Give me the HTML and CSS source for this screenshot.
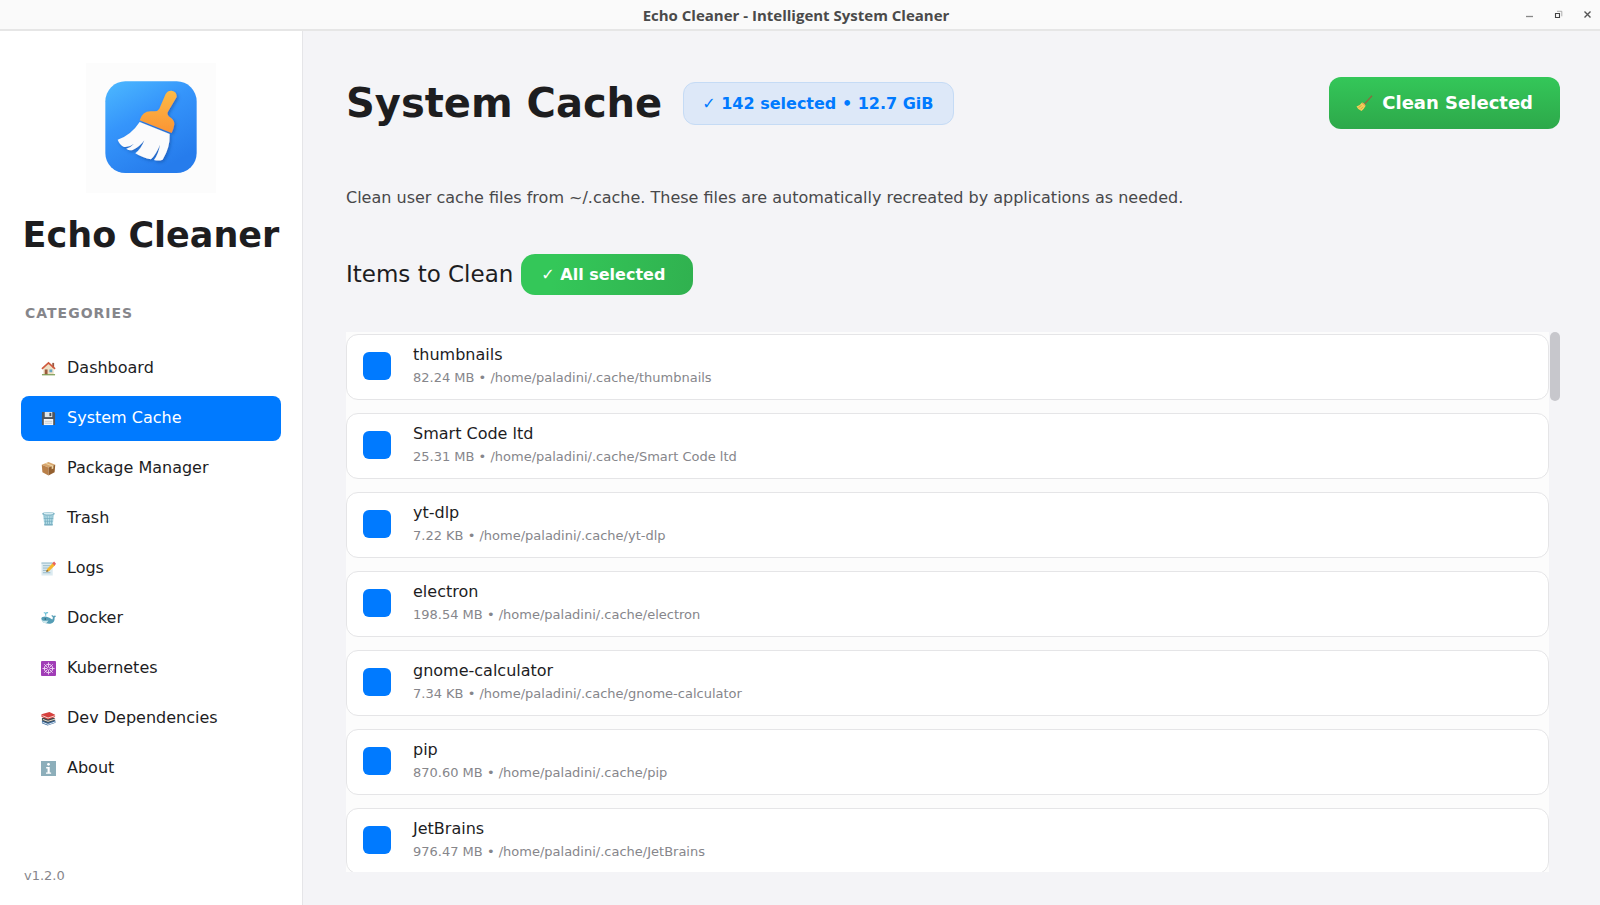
FILE: index.html
```html
<!DOCTYPE html>
<html lang="en">
<head>
<meta charset="utf-8">
<title>Echo Cleaner - Intelligent System Cleaner</title>
<link rel="stylesheet" href="styles.css">
</head>
<body>
<header class="titlebar">
  <span class="titlebar-side"></span>
  <span class="titlebar-text">Echo Cleaner - Intelligent System Cleaner</span>
  <span class="titlebar-side window-controls">
    <button type="button" aria-label="Minimize"><svg width="9" height="9" viewBox="0 0 9 9"><path d="M1 6.500h7" stroke="#888" stroke-width="1.300"/></svg></button>
    <button type="button" aria-label="Restore"><svg width="9" height="9" viewBox="0 0 9 9" fill="none"><path d="M1.500 3.500h4v4h-4z" stroke="#444" stroke-width="1.100"/><path d="M3 1.300h4.800v5" stroke="#999" stroke-width=".8"/></svg></button>
    <button type="button" aria-label="Close"><svg width="9" height="9" viewBox="0 0 9 9"><path d="M1.500 1.500l6 6M7.500 1.500l-6 6" stroke="#555" stroke-width="1.400"/></svg></button>
  </span>
</header>
<div class="app">
  <aside class="sidebar">
    <svg class="logo" viewBox="18 9 390 390" role="img" aria-label="Echo Cleaner logo">
      <defs>
        <linearGradient id="tile" x1="0" y1="0" x2=".55" y2="1"><stop offset="0" stop-color="#4db9ff"/><stop offset=".45" stop-color="#3595fb"/><stop offset="1" stop-color="#267cec"/></linearGradient>
        <linearGradient id="handle" x1="0" y1="0" x2="0" y2="1"><stop offset="0" stop-color="#fcbb47"/><stop offset="1" stop-color="#fb9433"/></linearGradient>
        <filter id="soft" x="-20%" y="-20%" width="150%" height="150%"><feDropShadow dx="4" dy="5" stdDeviation="4" flood-color="#0b3f91" flood-opacity=".5"/></filter>
      </defs>
      <path fill="#fcfcfc" d="M18 9h390v390H18z"/>
      <rect x="76" y="64" width="274" height="275" rx="60" fill="url(#tile)"/>
      <g filter="url(#soft)">
        <path fill="#fbfbfc" d="M179 186L269 222Q271 262 248 299Q236 304 222 300Q236 280 240 254Q229 282 213 298Q188 294 166 280Q184 266 193 241Q178 262 158 270Q147 273 139 266Q154 261 162 251Q146 263 132 261Q118 253 113 239Q153 226 179 186Z"/>
        <path fill="url(#handle)" d="M179 181Q187 154 212 154H224Q233 154 238 146L257 102Q263 91 275 92Q291 95 290 111L263 157Q260 163 266 169Q283 178 283 193Q281 207 275 219Z"/>
      </g>
    </svg>
    <div class="brand">Echo Cleaner</div>
    <h2 class="section-label">CATEGORIES</h2>
    <nav class="nav" aria-label="Categories">
      <a href="#dashboard"><svg viewBox="0 0 16 16"><path d="M2.500 8v6.500h11V8L8 3z" fill="#eee0c5"/><path d="M12 2h2v5h-2z" fill="#9a5a45"/><path d="M1 8.500L8 2l7 6.500" fill="none" stroke="#cf5a3d" stroke-width="1.800"/><path d="M4 9h3v5.500H4z" fill="#9b5b3d"/><path d="M9 9h3v3H9z" fill="#66a6c2"/><path d="M1 14h14v1.300H1z" fill="#7b9b52"/></svg>Dashboard</a>
      <a href="#cache" class="active" aria-current="page"><svg viewBox="0 0 16 16"><path d="M1 1h13l1 1v13H1z" fill="#50565d"/><path d="M4 1h8v5.500H4z" fill="#dfe5e9"/><path d="M9 2h2v3.500H9z" fill="#485057"/><path d="M3 8.500h10V15H3z" fill="#f5f6f7"/><path d="M4 11h8M4 13h8" stroke="#aeb7bd" stroke-width=".7"/></svg>System Cache</a>
      <a href="#packages"><svg viewBox="0 0 16 16"><path d="M.8 4L8 1l7.200 3L8 7z" fill="#d7a66d"/><path d="M.8 4L8 7v8.500L1.500 12z" fill="#b98049"/><path d="M15.200 4L8 7v8.500l6.500-3.500z" fill="#94602f"/><path d="M4 2.700l7.400 3v3l1.800-.8V5L5.800 2z" fill="#eed4a4"/></svg>Package Manager</a>
      <a href="#trash"><svg viewBox="0 0 16 16"><path d="M2 3.500h12L12.500 15h-9z" fill="#b4dbe5"/><path d="M4 5l1 9M6.500 5l.5 9M9.500 5L9 14M12 5l-1 9M3 8h10M3.500 11h9" stroke="#6eaabd" stroke-width=".7"/><ellipse cx="8" cy="3" rx="6.800" ry="2" fill="#83b7c8"/><ellipse cx="8" cy="2.700" rx="5" ry="1" fill="#d8edf2"/><path d="M3.500 14h9v1.500h-9z" fill="#74aabd"/></svg>Trash</a>
      <a href="#logs"><svg viewBox="0 0 16 16"><path d="M.5 1.500h12v14H.5z" fill="#dbeaf0"/><path d="M.5 1.500h12V3H.5z" fill="#acc9d6"/><path d="M2 5h8M2 7.500h7M2 10h5M2 12.500h8" stroke="#83aabc" stroke-width=".8"/><path d="M5.500 11.500l1-3L12.500 2 15 4.500 8.500 11z" fill="#f6b72d"/><path d="M12 2.500L14 .5 16 3l-1.500 2z" fill="#e76161"/><path d="M5.500 11.500l.8-2L8 11z" fill="#56432d"/></svg>Logs</a>
      <a href="#docker"><svg viewBox="0 0 16 16"><path d="M5 5V3.500Q5 1.500 3 2M5 3.500Q5.500 1 7.500 2" fill="none" stroke="#69bed5" stroke-width="1.200"/><path d="M.3 8Q1 5.500 6 6Q9 6.500 12 9Q13 8 12.500 6.500L10.800 5Q12.800 3.800 13.500 5.500Q15 4 16 5.500L14.500 7Q15 13 10 13.500Q1 14 .3 8Z" fill="#549db5"/><path d="M.5 9.500Q4 11 8 10Q6 13.500 3.500 12.800Q1 12 .5 9.500Z" fill="#cce7ec"/><circle cx="4.500" cy="8.500" r=".7" fill="#264857"/></svg>Docker</a>
      <a href="#kubernetes"><svg viewBox="0 0 16 16"><rect width="16" height="16" rx="1" fill="#a03db6"/><g fill="none" stroke="#f2dcf5"><circle cx="8" cy="8" r="4.500"/><path d="M8 1.500v13M1.500 8h13M3.400 3.400l9.200 9.200M12.600 3.400l-9.200 9.200" stroke-width=".9"/></g><circle cx="8" cy="8" r="1.300" fill="#a03db6"/></svg>Kubernetes</a>
      <a href="#dev"><svg viewBox="0 0 16 16"><path d="M1 10.500l9-2.500 5.500 2.500v2L7 15.500 1 13z" fill="#38689b"/><path d="M1.500 12l6 2.300 8-2.800" stroke="#e5edf2" stroke-width="1" fill="none"/><path d="M1 7.500l9-2L15 8v2l-8 2.500-6-2.500z" fill="#42494b"/><path d="M2 9l5.500 2L15 8.700" stroke="#f0e9dc" stroke-width="1" fill="none"/><path d="M.5 3.500L9 1l6 3v2.500L7.500 9l-7-3z" fill="#d6403e"/><path d="M1.500 5l6 2.500L15 5" stroke="#f5ddd5" stroke-width="1" fill="none"/></svg>Dev Dependencies</a>
      <a href="#about"><svg viewBox="0 0 16 16"><path d="M0 0h16v16H0z" fill="#8caeba"/><circle cx="8" cy="3.500" r="1.500" fill="#fff"/><path d="M5.500 6.500h3.800v5.700h1.500v1.500H5.300v-1.500H7V8H5.500z" fill="#fff"/></svg>About</a>
    </nav>
    <div class="version">v1.2.0</div>
  </aside>
  <main class="main">
    <div class="page-head">
      <h1>System Cache</h1>
      <div class="badge">✓ 142 selected • 12.7 GiB</div>
      <button type="button" class="clean"><svg viewBox="0 0 17 17"><path d="M16 .8L8 9.500" stroke="#8b6b3d" stroke-width="1.300"/><path d="M6 7.500Q9 8 9.500 11Q8 14 5.500 16Q2 15 .5 11.500Q4 10.500 6 7.500Z" fill="#f3cf5a"/><path d="M6 7.800l3.300 2.800" stroke="#da8a50" stroke-width=".9"/><path d="M2.500 12.500l3-2M4.500 14.300l2.500-2.500" stroke="#c18c30" stroke-width=".6"/></svg>Clean Selected</button>
    </div>
    <p class="description">Clean user cache files from ~/.cache. These files are automatically recreated by applications as needed.</p>
    <div class="items-head">
      <h2>Items to Clean</h2>
      <button type="button" class="all">✓ All selected</button>
    </div>
    <div class="list-wrap">
      <ul class="list">
        <li><input type="checkbox" id="i1" checked><label for="i1"><span class="name">thumbnails</span><span class="meta">82.24 MB • /home/paladini/.cache/thumbnails</span></label></li>
        <li><input type="checkbox" id="i2" checked><label for="i2"><span class="name">Smart Code ltd</span><span class="meta">25.31 MB • /home/paladini/.cache/Smart Code ltd</span></label></li>
        <li><input type="checkbox" id="i3" checked><label for="i3"><span class="name">yt-dlp</span><span class="meta">7.22 KB • /home/paladini/.cache/yt-dlp</span></label></li>
        <li><input type="checkbox" id="i4" checked><label for="i4"><span class="name">electron</span><span class="meta">198.54 MB • /home/paladini/.cache/electron</span></label></li>
        <li><input type="checkbox" id="i5" checked><label for="i5"><span class="name">gnome-calculator</span><span class="meta">7.34 KB • /home/paladini/.cache/gnome-calculator</span></label></li>
        <li><input type="checkbox" id="i6" checked><label for="i6"><span class="name">pip</span><span class="meta">870.60 MB • /home/paladini/.cache/pip</span></label></li>
        <li><input type="checkbox" id="i7" checked><label for="i7"><span class="name">JetBrains</span><span class="meta">976.47 MB • /home/paladini/.cache/JetBrains</span></label></li>
      </ul>
      <div class="scrollbar"><div class="thumb"></div></div>
    </div>
  </main>
</div>
</body>
</html>
```
FILE: styles.css
```css
* { box-sizing: border-box; }
body {
  margin: 0;
  height: 100vh;
  display: flex;
  flex-direction: column;
  overflow: hidden;
  font-family: "DejaVu Sans", sans-serif;
  color: #1d1d1f;
  background: #f4f4f7;
}
h1, h2, p, ul { margin: 0; padding: 0; }
button { font-family: inherit; border: 0; cursor: pointer; }

.titlebar {
  flex: none;
  height: 31px;
  display: flex;
  align-items: center;
  background: #fafafa;
  border-bottom: 2px solid #e6e6e6;
}
.titlebar-side { flex: 1; }
.titlebar-text {
  font: bold 15px/20px "Open Sans", sans-serif;
  color: #4a4a4a;
}
.window-controls {
  display: flex;
  justify-content: flex-end;
  gap: 20px;
  padding-right: 8px;
}
.window-controls button { display: flex; padding: 0; background: none; }

.app { flex: 1; min-height: 0; display: flex; }
.sidebar {
  flex: none;
  width: 303px;
  display: flex;
  flex-direction: column;
  padding: 32px 21px 19px;
  background: #fff;
  border-right: 1px solid #e5e5e8;
}
.logo { flex: none; width: 130px; height: 130px; align-self: center; }
.brand {
  margin: 21px -10px 0;
  font-size: 35px;
  line-height: 42px;
  font-weight: bold;
  text-align: center;
  white-space: nowrap;
}
.section-label {
  margin: 47px 4px 0;
  font-size: 14px;
  line-height: 20px;
  letter-spacing: 1px;
  color: #86868b;
}
.nav { display: flex; flex-direction: column; gap: 5px; margin-top: 23px; }
.nav a {
  display: flex;
  align-items: center;
  gap: 11px;
  height: 45px;
  padding: 0 20px 2px;
  border-radius: 8px;
  font-size: 16px;
  color: #1d1d1f;
  text-decoration: none;
}
.nav svg { flex: none; width: 15px; height: 15px; margin-top: 2px; }
.nav .active { background: #007aff; color: #fff; }
.version { margin: auto 3px 0; font-size: 13px; line-height: 20px; color: #86868b; }

.main {
  flex: 1;
  min-width: 0;
  display: flex;
  flex-direction: column;
  padding: 46px 40px 33px 43px;
}
.page-head { display: flex; align-items: center; }
h1 { font-size: 40px; line-height: 50px; }
.badge {
  margin-left: 21px;
  padding: 0 19px 0 18px;
  font-size: 16px;
  line-height: 41px;
  font-weight: bold;
  color: #007aff;
  background: #dde8f8;
  border: 1px solid #c5dbf5;
  border-radius: 12px;
}
.clean {
  display: flex;
  align-items: center;
  gap: 9px;
  height: 52px;
  margin-left: auto;
  padding: 0 27px 2px;
  font-size: 18px;
  font-weight: bold;
  color: #fff;
  background: linear-gradient(#34c759, #2da84a);
  border-radius: 12px;
}
.clean svg { width: 17px; height: 17px; margin-top: 2px; }
.description { margin-top: 59px; font-size: 16px; line-height: 20px; color: #48484a; }
.items-head { display: flex; align-items: center; gap: 8px; margin-top: 46px; }
.items-head h2 { font-size: 23px; line-height: 28px; padding-bottom: 1px; font-weight: normal; }
.all {
  height: 41px;
  padding: 0 28px 0 20px;
  font-size: 16px;
  font-weight: bold;
  color: #fff;
  background: linear-gradient(100deg, #34c759, #34c759 20%, #30b14f);
  border-radius: 14px;
}
.list-wrap { flex: 1; min-height: 0; display: flex; margin-top: 37px; }
.list {
  flex: 1;
  display: flex;
  flex-direction: column;
  gap: 13px;
  padding-top: 2px;
  overflow: hidden;
  list-style: none;
  background: #fcfcfc;
}
.list li {
  flex: none;
  display: flex;
  align-items: center;
  gap: 22px;
  height: 66px;
  padding: 0 16px 2px;
  background: #fff;
  border: 1px solid #e5e5e7;
  border-radius: 12px;
}
.list input {
  appearance: none;
  width: 28px;
  height: 28px;
  margin: 0;
  border-radius: 6px;
  background: #007aff;
}
.list label { display: flex; flex-direction: column; }
.name { font-size: 16px; line-height: 23px; }
.meta { font-size: 13px; line-height: 23px; color: #86868b; }
.scrollbar { flex: none; width: 11px; padding-left: 1px; }
.thumb { height: 69px; border-radius: 5px; background: #c7c7cc; }
```
